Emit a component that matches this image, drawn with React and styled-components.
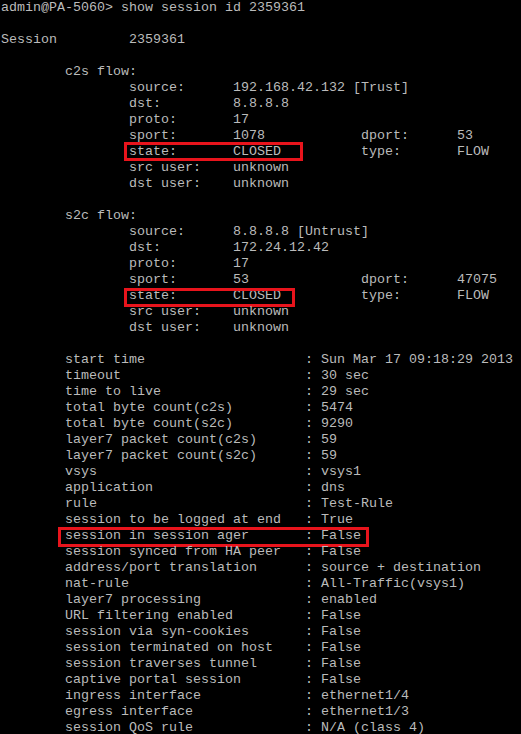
import React from "react";
import styled, { createGlobalStyle } from "styled-components";

const GlobalStyle = createGlobalStyle`
  html, body {
    margin: 0;
    padding: 0;
    background: #000000;
  }
`;

const Terminal = styled.div`
  width: 521px;
  height: 734px;
  overflow: hidden;
  background: #000000;
  color: #bbbbbb;
  font-family: "Liberation Mono", "Courier New", monospace;
  font-size: 13.333px;
  padding-left: 1px;
  box-sizing: border-box;
`;

const Line = styled.div`
  position: relative;
  height: 16px;
  line-height: 16px;
  white-space: pre;
`;

const Box = styled.span`
  position: absolute;
  left: ${(p) => p.$left}px;
  top: ${(p) => p.$top}px;
  width: ${(p) => p.$width}px;
  height: ${(p) => p.$height}px;
  border: 3px solid #e8141c;
  box-sizing: border-box;
  pointer-events: none;
`;

const pad = (s, n) => s + " ".repeat(Math.max(0, n - s.length));

const flow = (rows) =>
  rows.map(([k, v, k2, v2]) => {
    let s = pad(" ".repeat(16) + k, 29) + v;
    if (k2) s = pad(pad(s, 45) + k2, 57) + v2;
    return s;
  });

const attr = (k, v) => pad(" ".repeat(8) + k, 38) + ": " + v;

const lines = [
  { text: "admin@PA-5060> show session id 2359361" },
  { text: "" },
  { text: pad("Session", 16) + "2359361" },
  { text: "" },
  { text: "        c2s flow:" },
  ...flow([
    ["source:", "192.168.42.132 [Trust]"],
    ["dst:", "8.8.8.8"],
    ["proto:", "17"],
    ["sport:", "1078", "dport:", "53"],
    ["state:", "CLOSED", "type:", "FLOW"],
    ["src user:", "unknown"],
    ["dst user:", "unknown"],
  ]).map((text, i) =>
    i === 4 ? { text, box: { left: 123, top: -2, width: 179, height: 19 } } : { text }
  ),
  { text: "" },
  { text: "        s2c flow:" },
  ...flow([
    ["source:", "8.8.8.8 [Untrust]"],
    ["dst:", "172.24.12.42"],
    ["proto:", "17"],
    ["sport:", "53", "dport:", "47075"],
    ["state:", "CLOSED", "type:", "FLOW"],
    ["src user:", "unknown"],
    ["dst user:", "unknown"],
  ]).map((text, i) =>
    i === 4 ? { text, box: { left: 123, top: 0, width: 171, height: 19 } } : { text }
  ),
  { text: "" },
  ...[
    ["start time", "Sun Mar 17 09:18:29 2013"],
    ["timeout", "30 sec"],
    ["time to live", "29 sec"],
    ["total byte count(c2s)", "5474"],
    ["total byte count(s2c)", "9290"],
    ["layer7 packet count(c2s)", "59"],
    ["layer7 packet count(s2c)", "59"],
    ["vsys", "vsys1"],
    ["application", "dns"],
    ["rule", "Test-Rule"],
    ["session to be logged at end", "True"],
    ["session in session ager", "False"],
    ["session synced from HA peer", "False"],
    ["address/port translation", "source + destination"],
    ["nat-rule", "All-Traffic(vsys1)"],
    ["layer7 processing", "enabled"],
    ["URL filtering enabled", "False"],
    ["session via syn-cookies", "False"],
    ["session terminated on host", "False"],
    ["session traverses tunnel", "False"],
    ["captive portal session", "False"],
    ["ingress interface", "ethernet1/4"],
    ["egress interface", "ethernet1/3"],
    ["session QoS rule", "N/A (class 4)"],
  ].map(([k, v]) =>
    k === "session in session ager"
      ? { text: attr(k, v), box: { left: 57, top: -1, width: 311, height: 20 } }
      : { text: attr(k, v) }
  ),
];

const App = () => {
  return (
    <>
      <GlobalStyle />
      <Terminal>
        {lines.map((l, i) => (
          <Line key={i}>
            {l.text || " "}
            {l.box && (
              <Box
                $left={l.box.left}
                $top={l.box.top}
                $width={l.box.width}
                $height={l.box.height}
              />
            )}
          </Line>
        ))}
      </Terminal>
    </>
  );
};

export default App;
